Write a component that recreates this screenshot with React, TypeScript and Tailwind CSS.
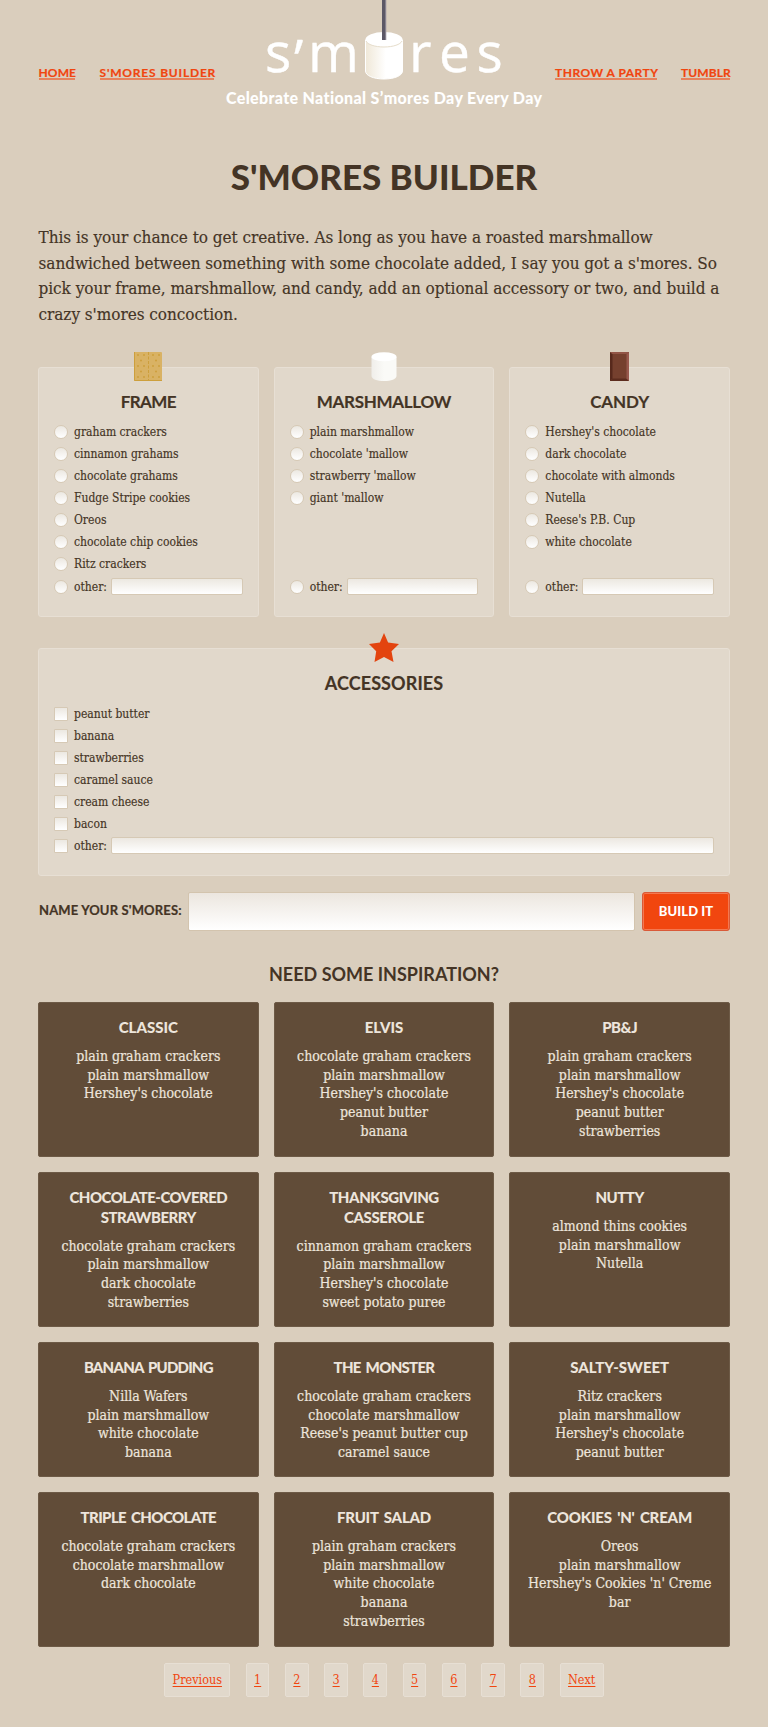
import React from "react";

const FRAMES = ["graham crackers", "cinnamon grahams", "chocolate grahams", "Fudge Stripe cookies", "Oreos", "chocolate chip cookies", "Ritz crackers"];
const MALLOWS = ["plain marshmallow", "chocolate 'mallow", "strawberry 'mallow", "giant 'mallow"];
const CANDIES = ["Hershey's chocolate", "dark chocolate", "chocolate with almonds", "Nutella", "Reese's P.B. Cup", "white chocolate"];
const ACCESSORIES = ["peanut butter", "banana", "strawberries", "caramel sauce", "cream cheese", "bacon"];

const TIGHT = "tracking-[-0.5px]";

const RECIPES: { title: string[]; titleClass?: string; lines: string[] }[] = [
  { title: ["Classic"], lines: ["plain graham crackers", "plain marshmallow", "Hershey's chocolate"] },
  { title: ["Elvis"], lines: ["chocolate graham crackers", "plain marshmallow", "Hershey's chocolate", "peanut butter", "banana"] },
  { title: ["PB&J"], titleClass: TIGHT, lines: ["plain graham crackers", "plain marshmallow", "Hershey's chocolate", "peanut butter", "strawberries"] },
  { title: ["Chocolate-Covered", "Strawberry"], titleClass: "tracking-[-0.5px]", lines: ["chocolate graham crackers", "plain marshmallow", "dark chocolate", "strawberries"] },
  { title: ["Thanksgiving", "Casserole"], titleClass: "tracking-[-0.4px]", lines: ["cinnamon graham crackers", "plain marshmallow", "Hershey's chocolate", "sweet potato puree"] },
  { title: ["Nutty"], titleClass: TIGHT, lines: ["almond thins cookies", "plain marshmallow", "Nutella"] },
  { title: ["Banana Pudding"], titleClass: "tracking-[-0.8px]", lines: ["Nilla Wafers", "plain marshmallow", "white chocolate", "banana"] },
  { title: ["The Monster"], titleClass: "tracking-[-0.7px]", lines: ["chocolate graham crackers", "chocolate marshmallow", "Reese's peanut butter cup", "caramel sauce"] },
  { title: ["Salty-Sweet"], lines: ["Ritz crackers", "plain marshmallow", "Hershey's chocolate", "peanut butter"] },
  { title: ["Triple Chocolate"], titleClass: "tracking-[-0.6px]", lines: ["chocolate graham crackers", "chocolate marshmallow", "dark chocolate"] },
  { title: ["Fruit Salad"], titleClass: "tracking-[-0.2px]", lines: ["plain graham crackers", "plain marshmallow", "white chocolate", "banana", "strawberries"] },
  { title: ["Cookies 'n' Cream"], titleClass: "tracking-[-0.2px]", lines: ["Oreos", "plain marshmallow", "Hershey's Cookies 'n' Creme", "bar"] },
];

function Logo() {
  return (
    <svg width="316" height="92" viewBox="226 0 316 92" className="block font-normal [font-stretch:normal]" aria-label="s'mores">
      <defs>
        <linearGradient id="logo-side" x1="0" x2="1">
          <stop offset="0" stopColor="#f0e8d8" />
          <stop offset="0.55" stopColor="#ffffff" />
        </linearGradient>
      </defs>
      <g fill="#fff" stroke="#fff" strokeWidth="0.4" fontFamily="'Open Sans', sans-serif" fontSize="55">
        <text x="265" y="71.500">s</text>
        <text x="294" y="79">’</text>
        <text x="308" y="71.500">m</text>
        <text x="409" y="71.500">r</text>
        <text x="439" y="71.500">e</text>
        <text x="476.500" y="71.500">s</text>
      </g>
      <path d="M365.500 40v31c0 4.600 8 8 18.500 8s18.500-3.400 18.500-8V40z" fill="url(#logo-side)" stroke="#fff" strokeWidth="1" />
      <ellipse cx="384" cy="39.500" rx="18.500" ry="7.500" fill="#fff" />
      <path d="M366 41c1.500 3.500 8.800 6 18 6s16.500-2.500 18-6" fill="none" stroke="#e6ddcb" strokeWidth="1" />
      <path d="M382 0h4v40h-4z" fill="#5c5866" />
      <path d="M385.300 0h1v40h-1z" fill="#9b95a0" />
    </svg>
  );
}

function CrackerIcon() {
  const dots = [
    [4, 3], [10, 3], [19, 3], [25, 3], [7, 8.500], [22, 8.500], [4, 14], [10, 14], [19, 14], [25, 14],
    [7, 19.500], [22, 19.500], [4, 25], [10, 25], [19, 25], [25, 25],
  ];
  return (
    <svg width="28" height="29" viewBox="0 0 28 29">
      <rect width="28" height="29" rx="1" fill="#d9b264" />
      <path d="M.5 0v28.500H28" fill="none" stroke="#cd9f3c" />
      <path d="M14.500 0v29" stroke="#cd9f3c" strokeDasharray="3 1.500" />
      {dots.map(([x, y]) => (
        <circle key={`${x}-${y}`} cx={x} cy={y} r="1" fill="#cd9f3c" />
      ))}
    </svg>
  );
}

function MallowIcon() {
  return (
    <svg width="26" height="29" viewBox="0 0 26 29">
      <defs>
        <linearGradient id="mallow-side" x1="0" x2="1">
          <stop offset="0" stopColor="#f0eeea" />
          <stop offset="0.5" stopColor="#fafaf7" />
        </linearGradient>
      </defs>
      <path d="M.5 5v19c0 3 5.500 5 12.500 5s12.500-2 12.500-5V5z" fill="url(#mallow-side)" />
      <ellipse cx="13" cy="4.700" rx="12.500" ry="4.500" fill="#fff" />
    </svg>
  );
}

function ChocolateIcon() {
  return (
    <svg width="19" height="29" viewBox="0 0 19 29">
      <path d="M0 0h19v29H0z" fill="#75402e" />
      <path d="M0 0l2.500 2.500v24L0 29z" fill="#57291c" />
      <path d="M0 29l2.500-2.500h14L19 29z" fill="#5c2c1e" />
      <path d="M0 0h19l-2.500 2H2.500z" fill="#925546" />
      <path d="M19 0v29l-2.500-2.500V2z" fill="#98594d" />
    </svg>
  );
}

function StarIcon() {
  return (
    <svg width="30" height="29" viewBox="0 0 30 29">
      <path d="M15 0l4.100 9.500L30 11l-7.500 7.200L24.500 29 15 24 5.500 29l1.700-10.800L0 11l10.900-1.500z" fill="#e3440f" />
    </svg>
  );
}

function Mark({ round }: { round?: boolean }) {
  return (
    <span
      className={
        round
          ? "size-[14px] shrink-0 rounded-full border border-[#d6c9b5] bg-linear-to-b from-[#ece8e1] to-white"
          : "size-[14px] shrink-0 rounded-[1px] border border-[#d6c9b5] bg-linear-to-b from-[#ece8e1] to-white"
      }
    />
  );
}

function Options({ items, round, className }: { items: string[]; round?: boolean; className: string }) {
  return (
    <div className={className}>
      {items.map((item) => (
        <label key={item} className="flex h-[22px] items-center gap-[6px] whitespace-nowrap">
          <Mark round={round} />
          <span>{item}</span>
        </label>
      ))}
    </div>
  );
}

function Panel({ title, titleClass, icon, items, round, className, optionsClass }: {
  title: string; titleClass: string; icon: React.ReactNode; items: string[]; round?: boolean; className: string; optionsClass: string;
}) {
  return (
    <section className={`relative rounded-[3px] border border-[#e7dfd4] bg-[#e1d8cb] px-[15px] [-webkit-text-stroke:0.150px] ${className}`}>
      <div className="absolute inset-x-0 -top-4 flex justify-center">{icon}</div>
      <h2 className={`h-[24px] text-center font-['Lato'] font-bold ${titleClass}`}>{title}</h2>
      <Options items={items} round={round} className={optionsClass} />
      <label className="flex h-[22px] items-center whitespace-nowrap">
        <Mark round={round} />
        <span className="ml-[6px] w-[37px]">other:</span>
        <span className="mb-[2px] h-[17px] flex-1 rounded-[2px] border border-[#d6c9b5] bg-linear-to-b from-[#ece8e1] to-white" />
      </label>
    </section>
  );
}

const NAV = "border-b-2 border-[#f0450f]/55 leading-[11px] whitespace-nowrap";

export default function App() {
  return (
    <div className="h-[1727px] w-[768px] bg-[#dacebd] px-[38px] font-['DejaVu_Serif',serif] text-[#443425] [font-stretch:condensed]">
      <header className="relative flex h-[110px] justify-between pt-[67px] font-['Lato'] text-[12px] font-bold text-[#f0450f] [-webkit-text-stroke:0.200px]">
        <nav className="flex items-start gap-[25px] pl-[0.500px]">
          <a className={`${NAV} w-[36px] tracking-[0.100px]`}>HOME</a>
          <a className={`${NAV} w-[114px] tracking-[0.800px]`}>S'MORES BUILDER</a>
        </nav>
        <div className="absolute top-0 left-[188px] w-[316px] text-center text-white [-webkit-text-stroke:0px]">
          <Logo />
          <p className="-mt-[4px] text-[16px] leading-[20px] font-black tracking-[0.350px] whitespace-nowrap">Celebrate National S’mores Day Every Day</p>
        </div>
        <nav className="flex items-start gap-[24px]">
          <a className={`${NAV} w-[102px] tracking-[0.500px]`}>THROW A PARTY</a>
          <a className={`${NAV} w-[49px] tracking-[0.100px]`}>TUMBLR</a>
        </nav>
      </header>

      <h1 className="mt-[42px] text-center font-['Lato'] text-[35px] leading-[48px] font-black">S'MORES BUILDER</h1>

      <p className="mt-[25px] h-[142px] pl-[0.500px] text-[17px] leading-[25.700px] tracking-[-0.040px] whitespace-nowrap [-webkit-text-stroke:0.150px]">
        This is your chance to get creative. As long as you have a roasted marshmallow<br />
        sandwiched between something with some chocolate added, I say you got a s'mores. So<br />
        pick your frame, marshmallow, and candy, add an optional accessory or two, and build a<br />
        crazy s'mores concoction.
      </p>

      <div className="grid grid-cols-3 gap-[15px] text-[12px]">
        <Panel title="FRAME" titleClass="text-[17px] leading-[24px] tracking-[-0.600px]" icon={<CrackerIcon />} items={FRAMES} round className="h-[250px] pt-[22px]" optionsClass="mt-[7px] h-[155px]" />
        <Panel title="MARSHMALLOW" titleClass="text-[17px] leading-[24px] tracking-[-0.300px]" icon={<MallowIcon />} items={MALLOWS} round className="h-[250px] pt-[22px]" optionsClass="mt-[7px] h-[155px]" />
        <Panel title="CANDY" titleClass="text-[17px] leading-[24px] tracking-[-0.100px]" icon={<ChocolateIcon />} items={CANDIES} round className="h-[250px] pt-[22px]" optionsClass="mt-[7px] h-[155px]" />
      </div>
      <div className="mt-[31px] text-[12px]">
        <Panel title="ACCESSORIES" titleClass="text-[18px] leading-[25px] tracking-[0.100px]" icon={<StarIcon />} items={ACCESSORIES} className="h-[228px] pt-[22px]" optionsClass="mt-[8px]" />
      </div>

      <form className="mt-[16px] flex h-[39px] items-stretch font-['Lato'] font-bold">
        <label className="w-[150px] pl-px text-[13px] leading-[37px] tracking-[0.150px] whitespace-nowrap [-webkit-text-stroke:0.200px]">NAME YOUR S'MORES:</label>
        <span className="flex-1 rounded-[2px] border border-[#d3c4ae] bg-linear-to-b from-[#ece6df] to-white" />
        <button type="button" className="ml-[7px] w-[88px] rounded-[3px] border border-[#d95a38] bg-[#f1460f] pb-px text-[13px] leading-[33px] font-black tracking-[0.100px] text-white inset-ring inset-ring-[#f47850]">BUILD IT</button>
      </form>

      <h2 className="mt-[31px] text-center font-['Lato'] text-[18px] leading-[24px] font-bold">NEED SOME INSPIRATION?</h2>

      <div className="mt-[16px] grid grid-cols-3 grid-rows-[155px_155px_135px_155px] gap-[15px]">
        {RECIPES.map((r) => (
          <article key={r.title[0]} className="rounded-[2px] border border-[#6d5a46] bg-[#614c38] pt-[15px] text-center text-[14px] leading-[18.800px] text-[#ede5dc] [-webkit-text-stroke:0.200px]">
            <h3 className={`font-['Lato'] text-[15px] leading-[19.800px] font-black uppercase [word-spacing:2px] [-webkit-text-stroke:0px] ${r.titleClass ?? ""}`}>
              {r.title.map((t) => (<span key={t} className="block">{t}</span>))}
            </h3>
            <ul className="mt-[9px] whitespace-nowrap">
              {r.lines.map((l) => (<li key={l}>{l}</li>))}
            </ul>
          </article>
        ))}
      </div>

      <nav className="mt-[16px] flex h-[34px] justify-center gap-[15.500px] text-[12.500px] leading-[32px] text-[#f0450f]">
        {["Previous", "1", "2", "3", "4", "5", "6", "7", "8", "Next"].map((p) => (
          <a key={p} className="rounded-[2px] border border-[#e7dfd4] bg-[#e1d8cb] px-[7.300px] underline underline-offset-2">{p}</a>
        ))}
      </nav>
    </div>
  );
}
